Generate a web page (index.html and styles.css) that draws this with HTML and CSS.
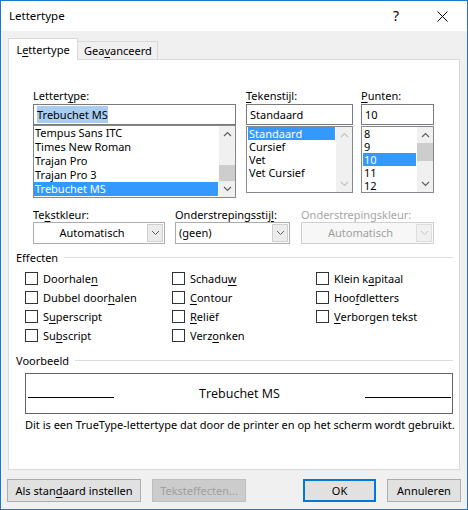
FILE: index.html
```html
<!DOCTYPE html>
<html>
<head>
<meta charset="utf-8">
<link rel="stylesheet" href="styles.css">
</head>
<body>
<div class="window">
  <div class="titlebar">
    <span class="title">Lettertype</span>
    <span class="help">?</span>
    <span class="close"><svg width="11" height="11" viewBox="0 0 11 11"><path d="M0.5 0.5 L10.5 10.5 M10.5 0.5 L0.5 10.5" stroke="#000" stroke-width="1" fill="none"/></svg></span>
  </div>
  <div class="tabs">
    <div class="tab active">L<u>e</u>ttertype</div>
    <div class="tab">Gea<u>v</u>anceerd</div>
  </div>
  <div class="panel">
    <div class="toprow">
      <div class="col col-font">
        <div class="label">Lettert<u>y</u>pe:</div>
        <div class="input"><span class="textsel">Trebuchet MS</span></div>
        <div class="list list-font">
          <div class="items">
            <div class="item">Tempus Sans ITC</div>
            <div class="item">Times New Roman</div>
            <div class="item">Trajan Pro</div>
            <div class="item">Trajan Pro 3</div>
            <div class="item selected">Trebuchet MS</div>
          </div>
          <div class="scrollbar">
            <div class="arrow up"><svg width="9" height="6" viewBox="0 0 9 6"><path d="M1 5 L4.5 1.5 L8 5" stroke="#606060" stroke-width="1.2" fill="none"/></svg></div>
            <div class="track"><div class="thumb thumb-font"></div></div>
            <div class="arrow down"><svg width="9" height="6" viewBox="0 0 9 6"><path d="M1 1 L4.5 4.5 L8 1" stroke="#606060" stroke-width="1.2" fill="none"/></svg></div>
          </div>
        </div>
      </div>
      <div class="col col-style">
        <div class="label"><u>T</u>ekenstijl:</div>
        <div class="input">Standaard</div>
        <div class="list list-small">
          <div class="items small">
            <div class="item selected">Standaard</div>
            <div class="item">Cursief</div>
            <div class="item">Vet</div>
            <div class="item">Vet Cursief</div>
          </div>
          <div class="scrollbar disabled">
            <div class="arrow up"><svg width="9" height="6" viewBox="0 0 9 6"><path d="M1 5 L4.5 1.5 L8 5" stroke="#c4c4c4" stroke-width="1.2" fill="none"/></svg></div>
            <div class="track"></div>
            <div class="arrow down"><svg width="9" height="6" viewBox="0 0 9 6"><path d="M1 1 L4.5 4.5 L8 1" stroke="#c4c4c4" stroke-width="1.2" fill="none"/></svg></div>
          </div>
        </div>
      </div>
      <div class="col col-size">
        <div class="label"><u>P</u>unten:</div>
        <div class="input">10</div>
        <div class="list list-small">
          <div class="items small">
            <div class="item">8</div>
            <div class="item">9</div>
            <div class="item selected">10</div>
            <div class="item">11</div>
            <div class="item">12</div>
          </div>
          <div class="scrollbar">
            <div class="arrow up"><svg width="9" height="6" viewBox="0 0 9 6"><path d="M1 5 L4.5 1.5 L8 5" stroke="#606060" stroke-width="1.2" fill="none"/></svg></div>
            <div class="track"><div class="thumb thumb-size"></div></div>
            <div class="arrow down"><svg width="9" height="6" viewBox="0 0 9 6"><path d="M1 1 L4.5 4.5 L8 1" stroke="#606060" stroke-width="1.2" fill="none"/></svg></div>
          </div>
        </div>
      </div>
    </div>

    <div class="colorrow">
      <div class="col col-color">
        <div class="label">Te<u>k</u>stkleur:</div>
        <div class="combo">
          <div class="combo-text center">Automatisch</div>
          <div class="combo-btn"><svg width="9" height="6" viewBox="0 0 9 6"><path d="M1 1 L4.5 4.5 L8 1" stroke="#606060" stroke-width="1" fill="none"/></svg></div>
        </div>
      </div>
      <div class="col col-ustyle">
        <div class="label">Onderstrepingsstij<u>l</u>:</div>
        <div class="combo">
          <div class="combo-text">(geen)</div>
          <div class="combo-btn"><svg width="9" height="6" viewBox="0 0 9 6"><path d="M1 1 L4.5 4.5 L8 1" stroke="#606060" stroke-width="1" fill="none"/></svg></div>
        </div>
      </div>
      <div class="col col-ucolor">
        <div class="label disabled-text">Onderstrepingskleur:</div>
        <div class="combo disabled">
          <div class="combo-text center">Automatisch</div>
          <div class="combo-btn"><svg width="9" height="6" viewBox="0 0 9 6"><path d="M1 1 L4.5 4.5 L8 1" stroke="#c4c4c4" stroke-width="1" fill="none"/></svg></div>
        </div>
      </div>
    </div>

    <div class="group-title effects-title">Effecten</div>
    <div class="checks">
      <div class="check"><span class="box"></span>Doorhale<u>n</u></div>
      <div class="check"><span class="box"></span>Schadu<u>w</u></div>
      <div class="check"><span class="box"></span>Klein k<u>a</u>pitaal</div>
      <div class="check"><span class="box"></span>Dubbel door<u>h</u>alen</div>
      <div class="check"><span class="box"></span><u>C</u>ontour</div>
      <div class="check"><span class="box"></span>Hoo<u>f</u>dletters</div>
      <div class="check"><span class="box"></span>S<u>u</u>perscript</div>
      <div class="check"><span class="box"></span><u>R</u>eliëf</div>
      <div class="check"><span class="box"></span><u>V</u>erborgen tekst</div>
      <div class="check"><span class="box"></span>Su<u>b</u>script</div>
      <div class="check"><span class="box"></span>Verz<u>o</u>nken</div>
    </div>

    <div class="group-title preview-title">Voorbeeld</div>
    <div class="preview">
      <div class="pline"></div>
      <div class="ptext">Trebuchet MS</div>
      <div class="pline"></div>
    </div>
    <div class="desc">Dit is een TrueType-lettertype dat door de printer en op het scherm wordt gebruikt.</div>
  </div>

  <div class="buttons">
    <div class="btn btn-default">Als stan<u>d</u>aard instellen</div>
    <div class="btn btn-effects disabled">Teksteffecten...</div>
    <div class="btn btn-ok">OK</div>
    <div class="btn btn-cancel">Annuleren</div>
  </div>
</div>
</body>
</html>
```

FILE: styles.css
```css
* { box-sizing: border-box; }
html, body { margin: 0; padding: 0; background: #fff; }
body {
  font-family: "Segoe UI", "Noto Sans", "Open Sans", sans-serif;
  font-size: 11px;
  color: #000;
}
u { text-decoration: underline; text-underline-offset: 2px; text-decoration-thickness: 1px; }

.window {
  width: 468px;
  height: 510px;
  border: 1px solid #1979ca;
  background: #f0f0f0;
  display: flex;
  flex-direction: column;
}

.titlebar {
  height: 30px;
  background: #fff;
  display: flex;
  align-items: center;
  padding-left: 8px;
  flex-shrink: 0;
}
.title { flex: 1; line-height: 16px; font-size: 11.5px; }
.help { width: 12px; font-size: 14px; line-height: 16px; margin-right: 35px; text-align: center; }
.close { width: 11px; height: 11px; display: flex; margin-right: 19px; }

.tabs {
  display: flex;
  align-items: flex-end;
  height: 21px;
  margin-top: 7px;
  padding-left: 7px;
  flex-shrink: 0;
}
.tab {
  height: 18px;
  padding: 0 6px;
  border: 1px solid #d9d9d9;
  border-bottom: none;
  background: #f0f0f0;
  line-height: 17px;
  margin-left: -1px;
  width: 81px;
  text-align: center;
}
.tab.active {
  height: 22px;
  width: 70px;
  margin-left: 0;
  margin-bottom: -1px;
  background: #fff;
  line-height: 22px;
  position: relative;
  z-index: 2;
}

.panel {
  width: 452px;
  height: 411px;
  margin-left: 7px;
  background: #fff;
  border: 1px solid #d9d9d9;
  padding: 28px 6px 0 7px;
  flex-shrink: 0;
  display: flex;
  flex-direction: column;
}

.label { height: 15px; line-height: 15px; white-space: nowrap; }
.disabled-text { color: #a6a6a6; }

.toprow { display: flex; margin-left: 17px; }
.col-font { width: 203px; margin-right: 10px; }
.col-style { width: 107px; margin-right: 8px; }
.col-size { width: 73px; }
.toprow .label { margin-bottom: 1px; }

.input {
  height: 21px;
  border: 1px solid #7a7a7a;
  background: #fff;
  padding: 0 3px;
  line-height: 19px;
  white-space: nowrap;
}
.textsel { background: #a9cdf0; padding: 1px 0; }

.list {
  border: 1px solid #828790;
  background: #fff;
  display: flex;
}
.list-font { height: 73px; }
.list-small { height: 67px; margin-top: 1px; }
.items { flex: 1; overflow: hidden; }
.item { height: 14px; line-height: 14px; padding-left: 1px; white-space: nowrap; }
.items.small .item { height: 13px; line-height: 13px; }
.list-small .items { margin-left: 1px; }
.item.selected { background: #3399ff; color: #fff; }

.scrollbar {
  width: 16px;
  margin-left: 1px;
  background: #f0f0f0;
  display: flex;
  flex-direction: column;
}
.arrow { height: 16px; display: flex; align-items: center; justify-content: center; }
.track { flex: 1; display: flex; flex-direction: column; }
.thumb { background: #cdcdcd; }
.thumb-font { height: 16px; margin-top: auto; }
.thumb-size { height: 18px; }

.colorrow { display: flex; margin-left: 17px; margin-top: 9px; }
.col-color { width: 132px; margin-right: 10px; }
.col-ustyle { width: 115px; margin-right: 11px; }
.col-ucolor { width: 133px; }
.combo {
  height: 22px;
  border: 1px solid #acacac;
  background: #fff;
  display: flex;
  padding: 1px;
}
.combo-text { flex: 1; line-height: 18px; padding-left: 2px; white-space: nowrap; }
.combo-text.center { text-align: center; }
.combo-btn {
  width: 16px;
  border: 1px solid #cfcfcf;
  background: #ececec;
  display: flex;
  align-items: center;
  justify-content: center;
}
.combo.disabled { border-color: #d0d0d0; background: #f7f7f7; }
.combo.disabled .combo-text { color: #a0a0a0; }
.combo.disabled .combo-btn { background: #f0f0f0; border-color: #dedede; }

.group-title {
  display: flex;
  align-items: center;
  height: 15px;
  line-height: 15px;
}
.group-title::after {
  content: "";
  flex: 1;
  border-top: 1px solid #dcdcdc;
  margin-left: 6px;
}
.effects-title { margin-top: 6px; }
.preview-title { margin-top: 8px; }

.checks {
  display: grid;
  grid-template-columns: 147px 144px 1fr;
  grid-auto-rows: 19px;
  margin-top: 4px;
  margin-left: 9px;
}
.check { display: flex; align-items: center; white-space: nowrap; }
.box {
  width: 13px;
  height: 13px;
  border: 1px solid #333;
  background: #fff;
  margin-right: 5px;
  flex-shrink: 0;
}

.preview {
  height: 41px;
  width: 428px;
  margin-top: 5px;
  margin-left: 9px;
  border: 1px solid #646464;
  display: flex;
  align-items: flex-start;
  padding: 0 1px 0 1px;
}
.pline { width: 86px; height: 24px; border-bottom: 1px solid #000; margin-left: 1px; }
.pline:last-child { margin-left: 0; }
.ptext {
  flex: 1;
  text-align: center;
  font-family: "Open Sans", "Noto Sans", sans-serif;
  font-size: 12.5px;
  line-height: 16px;
  margin-top: 12px;
}
.desc { margin-top: 4px; margin-left: 9px; line-height: 14px; white-space: nowrap; }

.buttons { display: flex; margin-top: 9px; margin-left: 6px; }
.btn {
  height: 23px;
  border: 1px solid #adadad;
  background: #e1e1e1;
  text-align: center;
  line-height: 21px;
  white-space: nowrap;
}
.btn-default { width: 134px; }
.btn-effects { width: 94px; margin-left: 11px; }
.btn.disabled { background: #cccccc; border-color: #bfbfbf; color: #a0a0a0; }
.btn-ok { width: 73px; margin-left: 57px; border: 2px solid #0078d7; line-height: 19px; }
.btn-cancel { width: 74px; margin-left: 11px; }
```
